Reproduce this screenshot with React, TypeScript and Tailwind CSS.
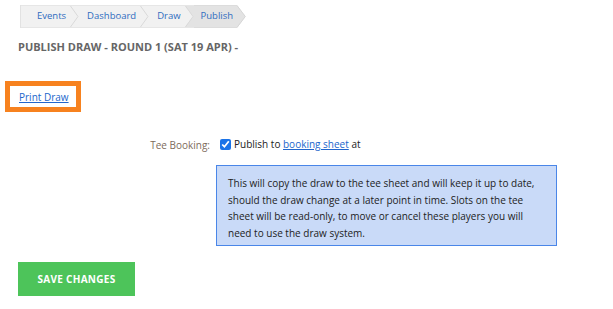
import React from "react";

const crumbs = ["Events", "Dashboard", "Draw"];

function Chevron({ dark }: { dark?: boolean }) {
  return (
    <svg width="9" height="21" viewBox="0 0 9 21" className="block shrink-0">
      <rect width="9" height="21" fill="#f1f1f1" />
      {dark && <path d="M0 0 H9 V21 H0 L8 10.5 Z" fill="#e3e3e3" />}
      <path d="M0.5 0 L8 10.5 L0.5 21" fill="none" stroke="#d9d9d9" strokeWidth="1" />
    </svg>
  );
}

export default function App() {
  return (
    <div className="w-[613px] h-[309px] bg-white font-['Open_Sans',sans-serif] relative overflow-hidden">
      {/* breadcrumb */}
      <div className="pt-[5px] pl-[20px] flex">
        <div className="flex items-stretch border-l border-[#e2e2e2]">
          {crumbs.map((c, i) => (
            <React.Fragment key={c}>
              <a
                className={
                  "h-[23px] bg-[#f1f1f1] border-y border-[#e6e6e6] flex items-center text-[9.5px] text-[#2f6cc0] pr-[4px] " +
                  (i === 0 ? "pl-[16px]" : "pl-[8px]")
                }
              >
                {c}
              </a>
              <div className="border-y border-[#e6e6e6] h-[23px] bg-[#f1f1f1]">
                <Chevron dark={i === crumbs.length - 1} />
              </div>
            </React.Fragment>
          ))}
          <a className="h-[23px] bg-[#e3e3e3] border-y border-[#dcdcdc] flex items-center text-[9.5px] text-[#2f6cc0] pl-[7px] pr-[4px]">
            Publish
          </a>
          <svg width="9" height="23" viewBox="0 0 9 23" className="block shrink-0">
            <path d="M0 0 L8.5 11.5 L0 23 Z" fill="#e3e3e3" />
            <path d="M0 0.5 L8.3 11.5 L0 22.5" fill="none" stroke="#d6d6d6" strokeWidth="1" />
          </svg>
        </div>
      </div>

      <h1 className="mt-[12px] pl-[18px] text-[11px] font-bold text-[#666] leading-[14px] uppercase">
        Publish Draw - Round 1 (Sat 19 Apr) -
      </h1>

      <div className="mt-[27px] ml-[5px] w-[76px] h-[31px] border-[5px] border-[#f7821f] flex items-center pl-[9px]">
        <a className="text-[10px] text-[#2266cc] underline leading-none">Print Draw</a>
      </div>

      <div className="mt-[23px] flex">
        <div className="w-[210px] text-right text-[10px] text-[#7d6b5b] pt-[3px]">Tee Booking:</div>
        <div className="ml-[10px]">
          <div className="flex items-center text-[10px] text-[#222] h-[18px]">
            <input type="checkbox" defaultChecked className="w-[11px] h-[11px] m-0 mr-[3px] accent-[#1a73e8]" />
            <span>Publish to&nbsp;</span>
            <a className="text-[#2266cc] underline">booking sheet</a>
            <span>&nbsp;at</span>
          </div>
          <div className="mt-[12px] -ml-[4px] w-[341px] h-[81px] bg-[#c9daf8] border border-[#4a86e8] pl-[11px] pr-[10px] pt-[9px] text-[10px] leading-[16.5px] text-[#222]">
            This will copy the draw to the tee sheet and will keep it up to date, should the draw change at a later point in time. Slots on the tee sheet will be read-only, to move or cancel these players you will need to use the draw system.
          </div>
        </div>
      </div>

      <button className="mt-[16px] ml-[18px] w-[117px] h-[34px] bg-[#4dc45a] text-white text-[10px] font-bold uppercase tracking-[0.3px]">
        Save Changes
      </button>
    </div>
  );
}
